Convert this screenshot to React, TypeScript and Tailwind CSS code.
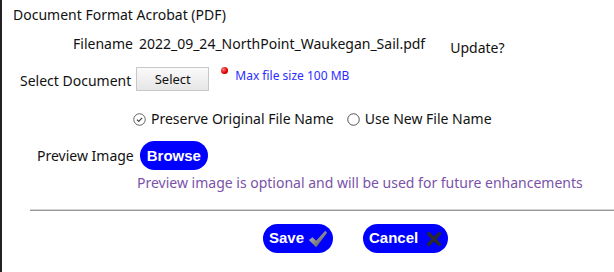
import React from "react";

const font = { fontFamily: '"Noto Sans", "Open Sans", sans-serif' };
const arial = { fontFamily: '"Liberation Sans", Arial, sans-serif' };

function CheckCircle() {
  return (
    <svg width="13" height="13" viewBox="0 0 14 14">
      <circle cx="7" cy="7" r="6.2" fill="none" stroke="#555" strokeWidth="1" />
      <path d="M4.2 7.2 L6.2 9.1 L9.8 5.2" fill="none" stroke="#444" strokeWidth="1.3" />
    </svg>
  );
}

function EmptyCircle() {
  return (
    <svg width="13" height="13" viewBox="0 0 14 14">
      <circle cx="7" cy="7" r="6.2" fill="none" stroke="#444" strokeWidth="1" />
    </svg>
  );
}

function SaveCheck() {
  return (
    <svg width="20" height="20" viewBox="0 0 22 20">
      <defs>
        <linearGradient id="g1" x1="0" y1="0" x2="1" y2="1">
          <stop offset="0" stopColor="#d0d0d0" />
          <stop offset="1" stopColor="#444" />
        </linearGradient>
      </defs>
      <path d="M1 11 L5 8 L9 12 L19 1 L21 3 L9 19 Z" fill="url(#g1)" />
    </svg>
  );
}

function CancelX() {
  return (
    <svg width="16" height="16" viewBox="0 0 18 18">
      <path d="M3 3 L15 15 M15 3 L3 15" stroke="#2a2a2a" strokeWidth="4" strokeLinecap="round" />
    </svg>
  );
}

export default function App() {
  return (
    <div className="w-[614px] h-[272px] bg-white relative overflow-hidden" style={font}>
      <div className="absolute left-0 top-0 bottom-0 w-[2px] bg-[#222]" />
      <div className="flex flex-col text-[14px] text-[#111]">
        <div className="h-[20px] mt-[5px] pl-[13px] leading-[20px]">Document Format Acrobat (PDF)</div>
        <div className="flex items-start h-[24px] mt-[9px] pl-[73px] leading-[20px]">
          <span>Filename</span>
          <span className="ml-[6px]">2022_09_24_NorthPoint_Waukegan_Sail.pdf</span>
          <span className="ml-[25px] mt-[4px]">Update?</span>
        </div>
        <div className="flex items-start h-[30px] mt-[4px] pl-[20px]">
          <span className="mt-[9px] leading-[20px]">Select Document</span>
          <button className="ml-[5px] w-[73px] h-[24px] mt-[5px] border border-[#c8c8c8] bg-gradient-to-b from-[#fafafa] to-[#e6e6e6] text-[13px] leading-[20px] text-[#111]">
            Select
          </button>
          <span className="ml-[12px] mt-[5px] w-[7px] h-[7px] rounded-full bg-[radial-gradient(circle_at_35%_35%,#ff8080,#e00000_55%,#900000)]" />
          <span className="ml-[7px] mt-[5px] text-[12px] leading-[18px] text-[#2b2bff]">Max file size 100 MB</span>
        </div>
        <div className="flex items-center h-[20px] mt-[17px] pl-[133px] leading-[20px]">
          <CheckCircle />
          <span className="ml-[5px]">Preserve Original File Name</span>
          <span className="ml-[13px] flex"><EmptyCircle /></span>
          <span className="ml-[5px]">Use New File Name</span>
        </div>
        <div className="flex items-center h-[29px] mt-[12px] pl-[37px]">
          <span className="leading-[20px]">Preview Image</span>
          <button
            className="ml-[6px] h-[29px] px-[7px] rounded-full bg-[#0000ff] text-white font-bold text-[15px] leading-[20px]"
            style={arial}
          >
            Browse
          </button>
        </div>
        <div className="pl-[137px] mt-[3px] leading-[20px] text-[#7a52a8]">
          Preview image is optional and will be used for future enhancements
        </div>
        <div className="ml-[30px] mt-[16px] h-[2px] border-t border-[#d4d4d4] bg-[#999]" />
        <div className="flex justify-start mt-[13px] pl-[263px] gap-[30px]">
          <button
            className="flex items-center h-[29px] w-[70px] pl-[6px] rounded-full bg-[#0000ff] text-white font-bold text-[15px]"
            style={arial}
          >
            Save<span className="ml-[4px] flex"><SaveCheck /></span>
          </button>
          <button
            className="flex items-center h-[29px] w-[85px] pl-[6px] rounded-full bg-[#0000ff] text-white font-bold text-[15px]"
            style={arial}
          >
            Cancel<span className="ml-[8px] flex"><CancelX /></span>
          </button>
        </div>
      </div>
    </div>
  );
}
